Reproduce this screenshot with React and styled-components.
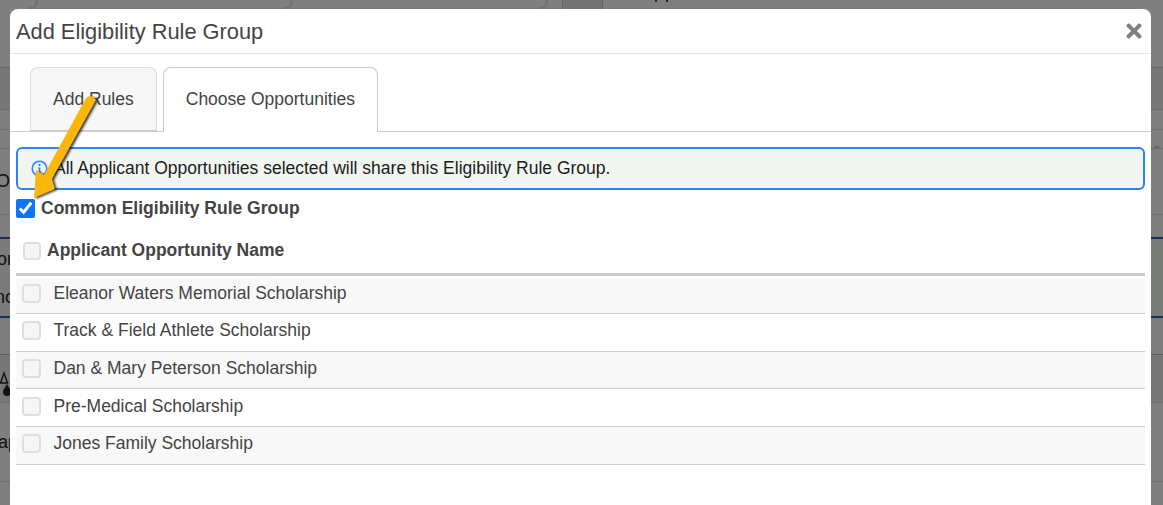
import styled, { createGlobalStyle } from 'styled-components';
import { FaTimes } from 'react-icons/fa';

const GlobalStyle = createGlobalStyle`
  html, body {
    margin: 0;
    height: 100%;
    overflow: hidden;
    background: #fff;
    font-family: "Liberation Sans", Arial, sans-serif;
  }
  * {
    box-sizing: border-box;
  }
`;

/* page behind the modal, only its edges show */
const Page = styled.div`
  height: 505px;
  display: flex;
  flex-direction: column;
  color: #222;
  font-size: 18px;
`;

const TopStrip = styled.div`
  height: 68px;
  flex: none;
  display: flex;
  background: #fff;
  border-bottom: 1px solid #ccc;
`;

const Swirl = styled.svg`
  width: 255px;
  height: 10px;
  flex: none;
`;

const TopCell = styled.div`
  width: 41px;
  height: 9px;
  margin-left: -203px;
  background: #e6e6e6;
  border-left: 1px solid #ccc;
  border-right: 1px solid #ccc;
`;

const TopDots = styled.svg`
  width: 70px;
  height: 4px;
  flex: none;
`;

const BackRow = styled.div`
  height: ${(p) => p.$h}px;
  flex: none;
  display: flex;
  align-items: center;
  background: ${(p) => p.$bg || '#fff'};
  border-bottom: ${(p) => p.$line || '1px solid #ddd'};
`;

const BackText = styled.span`
  width: ${(p) => p.$w}px;
  display: flex;
  justify-content: flex-end;
  white-space: nowrap;
`;

const BackIcon = styled.svg`
  width: 12px;
  height: 34px;
  flex: none;
`;

const SortCaret = styled.span`
  margin: auto 2px 0 auto;
  border-left: 4px solid transparent;
  border-right: 4px solid transparent;
  border-bottom: 3px solid #d0d0d0;
`;

const Overlay = styled.div`
  position: fixed;
  inset: 0;
  padding: 9px 12px 0 10px;
  background: rgba(0, 0, 0, 0.5);
  overflow: hidden;
`;

const Modal = styled.div`
  min-height: 600px;
  background: #fff;
  border-radius: 8px 8px 0 0;
  color: #444;
`;

const Header = styled.div`
  height: 45px;
  display: flex;
  align-items: center;
  justify-content: space-between;
  padding: 0 6px 0 6px;
  border-bottom: 1px solid #e5e5e5;
`;

const Title = styled.h4`
  margin: 1px 0 0;
  font-size: 21.8px;
  font-weight: 400;
  line-height: 1;
`;

const CloseButton = styled.button`
  display: flex;
  padding: 0;
  margin-bottom: 1px;
  border: 0;
  background: none;
  color: #808080;
  font-size: 22px;
`;

const TabList = styled.div`
  display: flex;
  gap: 6px;
  height: 78px;
  padding: 13px 0 0 20px;
  border-bottom: 1px solid #ccc;
`;

const Tab = styled.div`
  height: ${(p) => (p.$active ? 65 : 64)}px;
  padding: 0 22px ${(p) => (p.$active ? 2 : 0)}px;
  display: flex;
  align-items: center;
  font-size: 17.5px;
  border: 1px solid ${(p) => (p.$active ? '#ccc' : '#ddd')};
  border-bottom: ${(p) => (p.$active ? '0' : '1px solid #ccc')};
  border-radius: 8px 8px 0 0;
  background: ${(p) => (p.$active ? '#fff' : '#f7f7f7')};
  color: #444;
`;

const Body = styled.div`
  padding: 15px 6px 0;
`;

const Alert = styled.div`
  height: 43px;
  display: flex;
  align-items: center;
  gap: 6px;
  padding: 0 13px;
  border: 2px solid #2f83f7;
  border-radius: 6px;
  background: linear-gradient(#f0f6ef, #f3f5f3);
  color: #1c1c1c;
  font-size: 17.5px;
`;

const InfoIcon = styled.svg`
  width: 17px;
  height: 17px;
  flex: none;
`;

const CommonRow = styled.label`
  height: 36px;
  display: flex;
  align-items: center;
  gap: 6px;
  font-size: 17.5px;
  font-weight: 700;
`;

const CommonCheck = styled.input`
  width: 19px;
  height: 19px;
  margin: 0;
  accent-color: #0a75ff;
`;

const Check = styled.input`
  appearance: none;
  flex: none;
  width: ${(p) => p.$size}px;
  height: ${(p) => p.$size}px;
  margin: 0;
  border: 2px solid #dedede;
  border-radius: 4px;
  background: #f6f6f6;
`;

const TableHead = styled.div`
  height: 50px;
  display: flex;
  align-items: center;
  gap: 6px;
  padding: 2px 0 0 7px;
  margin-bottom: 2px;
  font-size: 17.5px;
  font-weight: 700;
  border-bottom: 3px solid #ccc;
`;

const Row = styled.div`
  height: ${(p) => p.$h}px;
  display: flex;
  align-items: center;
  gap: 12.5px;
  padding: 0 0 ${(p) => p.$pad}px 6px;
  font-size: 17.5px;
  background: ${(p) => (p.$odd ? '#f8f8f8' : '#fff')};
  border-bottom: 1px solid #ccc;
`;

const Arrow = styled.svg`
  position: fixed;
  left: 20px;
  top: 90px;
  width: 85px;
  height: 115px;
  pointer-events: none;
  filter: drop-shadow(2px 1.5px 1px rgba(0, 0, 0, 0.75));
`;

const opportunities = [
  { name: 'Eleanor Waters Memorial Scholarship', h: 36, pad: 4 },
  { name: 'Track & Field Athlete Scholarship', h: 38, pad: 4 },
  { name: 'Dan & Mary Peterson Scholarship', h: 37, pad: 4 },
  { name: 'Pre-Medical Scholarship', h: 38, pad: 2 },
  { name: 'Jones Family Scholarship', h: 38, pad: 4 },
];

const App = () => (
  <>
    <GlobalStyle />
    <Page>
      <TopStrip>
        {[0, 1, 2].map((i) => (
          <Swirl key={i} viewBox="0 0 255 10">
            <path d="M36 0q4 6 -8 9" fill="none" stroke="#e8e8e8" strokeWidth="3" />
          </Swirl>
        ))}
        <TopCell />
        <TopDots viewBox="0 0 70 4">
          <rect x="52" width="2" height="2" fill="#444" />
          <rect x="63" width="2" height="2" fill="#444" />
        </TopDots>
      </TopStrip>
      <BackRow $h={42} $bg="#eeeeee" />
      <BackRow $h={20} />
      <BackRow $h={19}>
        <SortCaret />
      </BackRow>
      <BackRow $h={66}>
        <BackText $w={10}>O</BackText>
      </BackRow>
      <BackRow $h={24} $line="2px solid #2a62b8" />
      <BackRow $h={40} $bg="#f4f9f4" $line="0">
        <BackText $w={13}>or</BackText>
      </BackRow>
      <BackRow $h={39} $bg="#f4f9f4" $line="2px solid #2a62b8">
        <BackText $w={14}>nc</BackText>
      </BackRow>
      <BackRow $h={37} $bg="#fafafa" $line="1px solid #bbb" />
      <BackRow $h={48} $bg="#eeeeee">
        <BackIcon viewBox="0 0 12 34">
          <path d="M0.5 21L4 11L7.5 21Z" fill="none" stroke="#222" strokeWidth="1.4" />
          <path d="M7 22C9 26 11 27 11 30a4 4 0 0 1-8 0C3 27 5 26 7 22Z" fill="#222" />
        </BackIcon>
      </BackRow>
      <BackRow $h={79}>
        <BackText $w={18}>ap</BackText>
      </BackRow>
      <BackRow $h={23} $line="0" />
    </Page>
    <Overlay>
      <Modal>
        <Header>
          <Title>Add Eligibility Rule Group</Title>
          <CloseButton>
            <FaTimes />
          </CloseButton>
        </Header>
        <TabList>
          <Tab>Add Rules</Tab>
          <Tab $active>Choose Opportunities</Tab>
        </TabList>
        <Body>
          <Alert>
            <InfoIcon viewBox="0 0 17 17">
              <circle cx="8.5" cy="8.5" r="7.3" fill="none" stroke="#2f83f7" strokeWidth="1.6" />
              <circle cx="8.5" cy="5" r="1.2" fill="#2f83f7" />
              <path d="M7 7.4h2.4v4.4h1v1.2H6.8v-1.2h.9V8.6H7z" fill="#2f83f7" />
            </InfoIcon>
            All Applicant Opportunities selected will share this Eligibility Rule Group.
          </Alert>
          <CommonRow>
            <CommonCheck type="checkbox" defaultChecked />
            Common Eligibility Rule Group
          </CommonRow>
          <TableHead>
            <Check type="checkbox" disabled $size={18} />
            Applicant Opportunity Name
          </TableHead>
          {opportunities.map((item, i) => (
            <Row key={item.name} $h={item.h} $pad={item.pad} $odd={i % 2 === 0}>
              <Check type="checkbox" disabled $size={19} />
              {item.name}
            </Row>
          ))}
        </Body>
      </Modal>
    </Overlay>
    <Arrow viewBox="20 90 85 115">
      <path d="M86 98Q91 93 96 100L52 179L55 189L34 198L36 170L44 175Z" fill="#fcb60c" />
    </Arrow>
  </>
);

export default App;
